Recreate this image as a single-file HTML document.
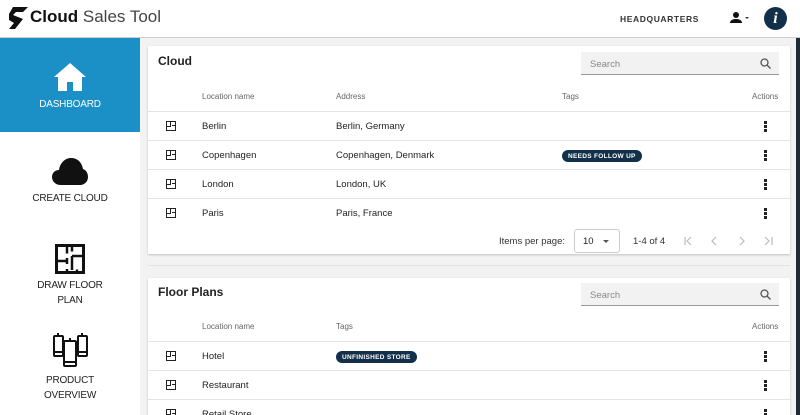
<!DOCTYPE html><html><head><style>
*{margin:0;padding:0;box-sizing:border-box}
html,body{width:800px;height:415px;overflow:hidden}
body{font-family:"Liberation Sans",sans-serif;background:#f2f2f2;position:relative;color:#222}
.hdr{position:absolute;left:0;top:0;width:800px;height:38px;background:#fff;border-bottom:1px solid #ccc}
.side{position:absolute;left:0;top:38px;width:140px;height:377px;background:#fff}
.dash{position:absolute;left:0;top:0;width:140px;height:94px;background:#1a90c6;color:#fff}
.lbl{position:absolute;width:140px;text-align:center;font-size:10px;line-height:15px;letter-spacing:-.2px}
.card{position:absolute;left:148px;width:642px;background:#fff;box-shadow:0 1px 2px rgba(0,0,0,.2)}
.title{position:absolute;left:10px;font-size:12px;font-weight:bold;color:#222}
.search{position:absolute;left:433px;width:198px;height:23px;background:#f2f2f2;border-bottom:1px solid #999;font-size:9.5px;color:#888;padding:7px 9px}
.row{position:absolute;left:0;width:642px;border-top:1px solid #e4e4e4;font-size:9.5px}
.th{font-size:8px;color:#666}
.c{position:absolute}
.dots{position:absolute;left:616px;width:3px}
.dots i{display:block;width:2.5px;height:2.5px;background:#222;margin-bottom:1.5px}
.tag{position:absolute;background:#13304a;color:#fff;font-size:6.5px;font-weight:bold;border-radius:7px;padding:2.5px 6px;letter-spacing:.3px}
.fp{width:10px;height:10px;border:1.5px solid #222;background:linear-gradient(#222,#222) 3px 0/1.3px 4px no-repeat,linear-gradient(#222,#222) 0 4px/4px 1.3px no-repeat,linear-gradient(#222,#222) 5px 3px/4px 1.3px no-repeat}
</style></head><body>
<div class="hdr">
<svg style="position:absolute;left:9px;top:7px" width="19" height="22" viewBox="0 0 19 22"><path d="M4 0h15l-5 5H7l-3 3 10 4-8 10H0l5-6-5-3V7z" fill="#111"/></svg>
<div style="position:absolute;left:30px;top:7px;font-size:17px;color:#222"><b style="color:#111">Cloud</b> <span style="color:#444">Sales Tool</span></div>
<div style="position:absolute;left:620px;top:14px;font-size:8.5px;font-weight:bold;letter-spacing:.6px;color:#333">HEADQUARTERS</div>
<svg style="position:absolute;left:730px;top:12px" width="22" height="12" viewBox="0 0 22 12"><circle cx="6" cy="3" r="3" fill="#111"/><path d="M0 11c0-3 3-4 6-4s6 1 6 4z" fill="#111"/><path d="M15 5h4l-2 2z" fill="#333"/></svg>
<div style="position:absolute;left:764px;top:7px;width:23px;height:23px;border-radius:50%;background:#13304a;color:#fff;font:italic bold 16px 'Liberation Serif',serif;text-align:center;line-height:23px">i</div>
</div>
<div style="position:absolute;left:796px;top:38px;width:4px;height:377px;background:#1e2a36"></div>
<div class="side">
<div class="dash">
<svg style="position:absolute;left:54px;top:25px" width="32" height="28" viewBox="0 0 32 28"><path d="M16 0L0 14h4v14h9v-9h6v9h9V14h4z" fill="#fff"/></svg>
<div class="lbl" style="top:59px;color:#fff">DASHBOARD</div>
</div>
<svg style="position:absolute;left:52px;top:118px" width="36" height="30" viewBox="0 0 36 30"><path d="M9 29C3 29 0 25 0 21s3-7 7-7c1-7 6-12 12-12 7 0 11 5 12 11 3 1 5 4 5 8 0 5-4 8-8 8z" fill="#111"/></svg>
<div class="lbl" style="top:153px;color:#222">CREATE CLOUD</div>
<svg style="position:absolute;left:55px;top:206px" width="30" height="30" viewBox="0 0 30 30" fill="none" stroke="#111" stroke-width="3"><rect x="1.5" y="1.5" width="27" height="27"/><path d="M12 1.5v8M12 14v6M1.5 17h10M12 25v3.5M17 1.5v6M17 12h11M17 12v14M22 28.5v-3" stroke-width="2.5"/></svg>
<div class="lbl" style="top:240px;color:#222">DRAW FLOOR<br>PLAN</div>
<svg style="position:absolute;left:52px;top:294px" width="36" height="36" viewBox="0 0 36 36" fill="#fff" stroke="#111" stroke-width="2"><rect x="2" y="4" width="9" height="20" rx="1"/><rect x="26" y="4" width="9" height="20" rx="1"/><rect x="12" y="9" width="12" height="25" rx="1"/><path d="M6 1v3M30 1v3M18 6v3M13 30h10M3 20h7M27 20h7"/></svg>
<div class="lbl" style="top:335px;color:#222">PRODUCT<br>OVERVIEW</div>
</div>

<div class="card" style="top:46px;height:208px">
<div class="title" style="top:8px">Cloud</div>
<div class="search" style="top:6px">Search<svg style="position:absolute;right:8px;top:6px" width="11" height="11" viewBox="0 0 11 11" fill="none" stroke="#555" stroke-width="1.3"><circle cx="4.5" cy="4.5" r="3.5"/><path d="M7 7l3.5 3.5"/></svg></div>
<div class="th"><span class="c" style="left:54px;top:46px">Location name</span><span class="c" style="left:188px;top:46px">Address</span><span class="c" style="left:414px;top:46px">Tags</span><span class="c" style="left:604px;top:46px">Actions</span></div>
<div class="row" style="top:65px;height:29px"><span class="c fp" style="left:18px;top:9px"></span><span class="c" style="left:54px;top:9px">Berlin</span><span class="c" style="left:188px;top:9px">Berlin, Germany</span><span class="dots" style="top:9px"><i></i><i></i><i></i></span></div>
<div class="row" style="top:94px;height:29px"><span class="c fp" style="left:18px;top:9px"></span><span class="c" style="left:54px;top:9px">Copenhagen</span><span class="c" style="left:188px;top:9px">Copenhagen, Denmark</span><span class="tag" style="left:414px;top:9px">NEEDS FOLLOW UP</span><span class="dots" style="top:9px"><i></i><i></i><i></i></span></div>
<div class="row" style="top:123px;height:29px"><span class="c fp" style="left:18px;top:9px"></span><span class="c" style="left:54px;top:9px">London</span><span class="c" style="left:188px;top:9px">London, UK</span><span class="dots" style="top:9px"><i></i><i></i><i></i></span></div>
<div class="row" style="top:152px;height:29px"><span class="c fp" style="left:18px;top:9px"></span><span class="c" style="left:54px;top:9px">Paris</span><span class="c" style="left:188px;top:9px">Paris, France</span><span class="dots" style="top:9px"><i></i><i></i><i></i></span></div>
<span class="c" style="left:351px;top:190px;font-size:9.5px;color:#333">Items per page:</span>
<div class="c" style="left:426px;top:183px;width:46px;height:24px;border:1px solid #ccc;border-radius:3px;font-size:9.5px;padding:6px 8px">10<svg style="position:absolute;left:28px;top:10px" width="6" height="4" viewBox="0 0 6 4"><path d="M0 0h6L3 3z" fill="#555"/></svg></div>
<span class="c" style="left:485px;top:190px;font-size:9.5px;color:#333">1-4 of 4</span>
<svg class="c" style="left:536px;top:190px" width="92" height="10" viewBox="0 0 92 10" fill="none" stroke="#bbb" stroke-width="1.2"><path d="M1 1v8M7 1L3 5l4 4M32 1l-4 4 4 4M56 1l4 4-4 4M81 1l4 4-4 4M88 1v8"/></svg>
</div>
<div style="position:absolute;left:148px;top:265px;width:642px;height:1px;background:#e2e2e2"></div>
<div class="card" style="top:278px;height:150px">
<div class="title" style="top:7px">Floor Plans</div>
<div class="search" style="top:5px">Search<svg style="position:absolute;right:8px;top:6px" width="11" height="11" viewBox="0 0 11 11" fill="none" stroke="#555" stroke-width="1.3"><circle cx="4.5" cy="4.5" r="3.5"/><path d="M7 7l3.5 3.5"/></svg></div>
<div class="th"><span class="c" style="left:54px;top:44px">Location name</span><span class="c" style="left:188px;top:44px">Tags</span><span class="c" style="left:604px;top:44px">Actions</span></div>
<div class="row" style="top:63px;height:29px"><span class="c fp" style="left:18px;top:9px"></span><span class="c" style="left:54px;top:9px">Hotel</span><span class="tag" style="left:188px;top:9px">UNFINISHED STORE</span><span class="dots" style="top:9px"><i></i><i></i><i></i></span></div>
<div class="row" style="top:92px;height:29px"><span class="c fp" style="left:18px;top:9px"></span><span class="c" style="left:54px;top:9px">Restaurant</span><span class="dots" style="top:9px"><i></i><i></i><i></i></span></div>
<div class="row" style="top:121px;height:29px"><span class="c fp" style="left:18px;top:9px"></span><span class="c" style="left:54px;top:9px">Retail Store</span><span class="dots" style="top:9px"><i></i><i></i><i></i></span></div>
</div>
</body></html>
